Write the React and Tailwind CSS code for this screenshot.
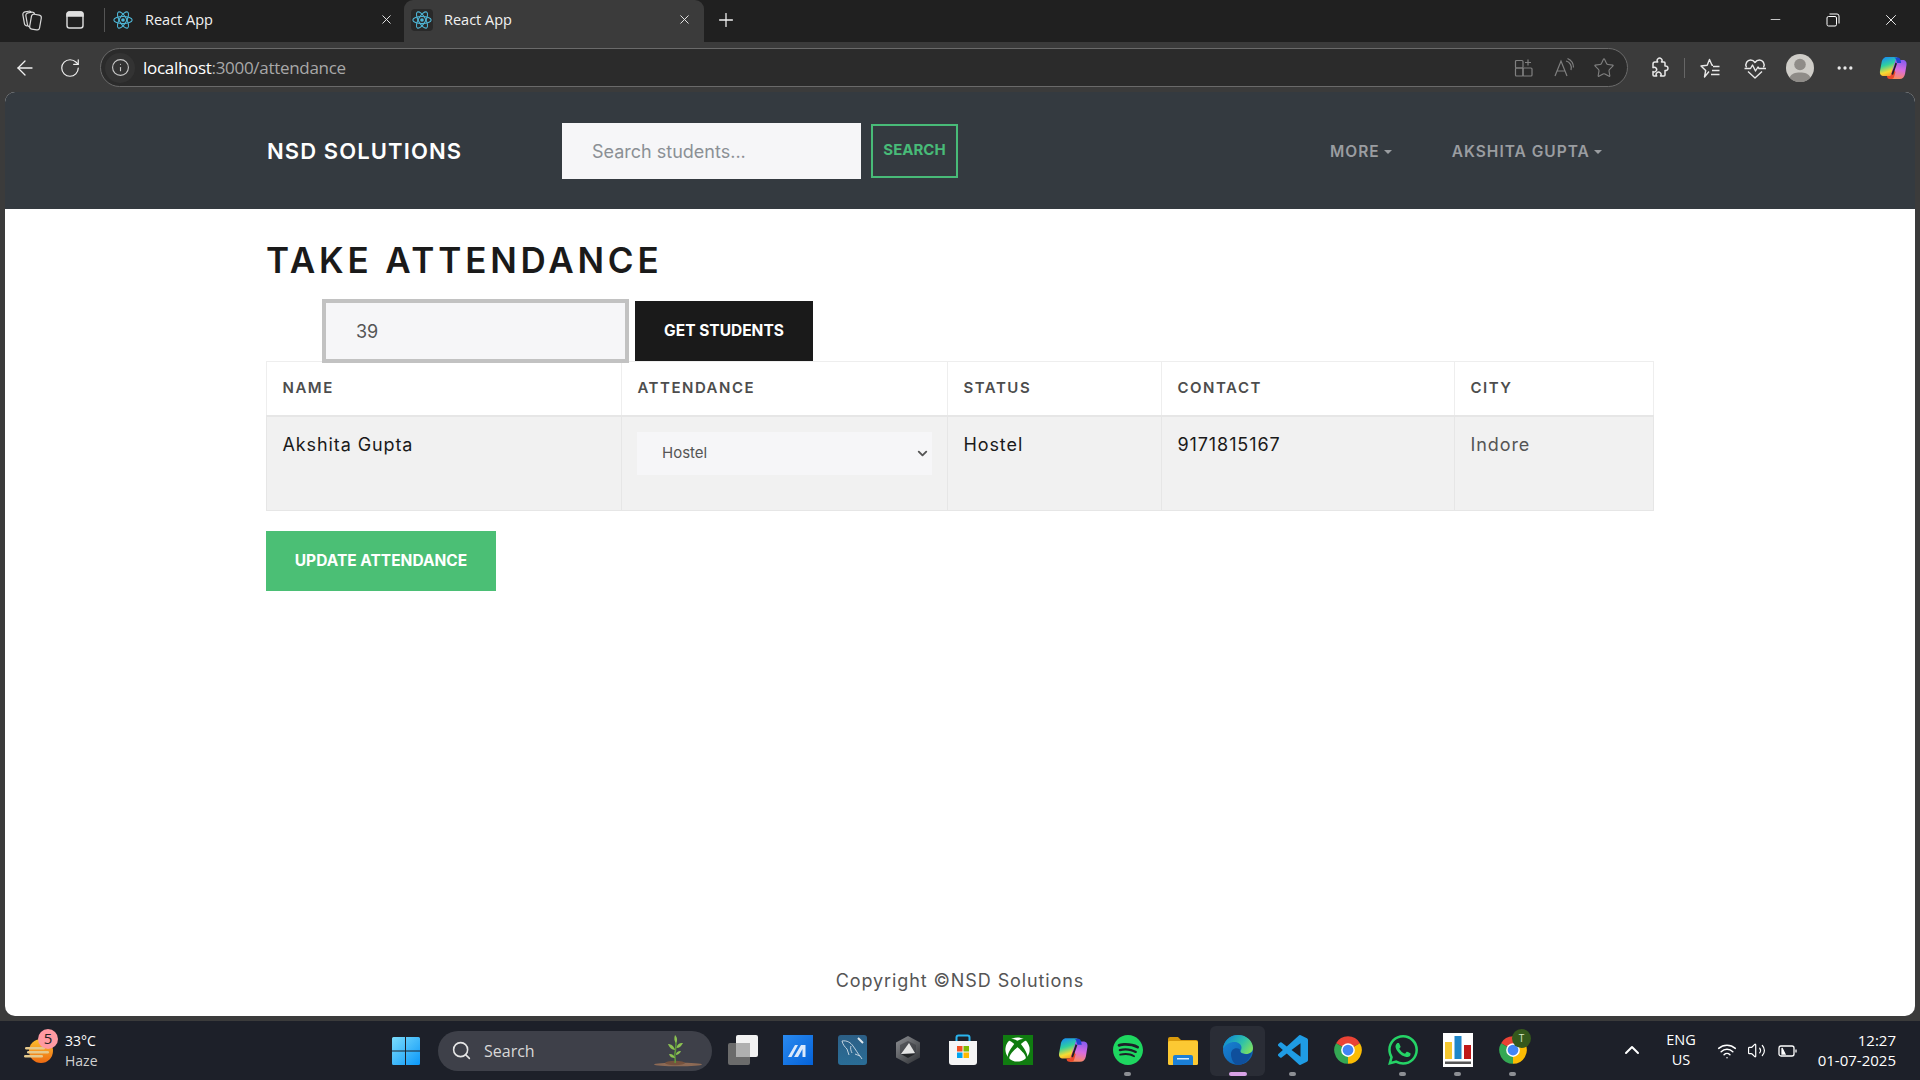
import React from "react";
import { ArrowLeft, RotateCw, Info, Star, Plus, X, Minus, ChevronUp, ChevronDown, Search, Wifi, Volume2, MoreHorizontal } from "lucide-react";
import { SiSpotify, SiWhatsapp } from "react-icons/si";
import { FaXbox } from "react-icons/fa";

const ReactAtom = () => (
  <svg width="20" height="20" viewBox="0 0 24 24" fill="none" stroke="#4fb6d6" strokeWidth="1.3">
    <ellipse cx="12" cy="12" rx="11" ry="4.3" />
    <ellipse cx="12" cy="12" rx="11" ry="4.3" transform="rotate(60 12 12)" />
    <ellipse cx="12" cy="12" rx="11" ry="4.3" transform="rotate(120 12 12)" />
    <circle cx="12" cy="12" r="2.2" fill="#4fb6d6" stroke="none" />
  </svg>
);

const Collections = () => (
  <svg width="24" height="24" viewBox="0 0 24 24" fill="#202020" stroke="#d8d8d8" strokeWidth="1.2">
    <rect x="3.5" y="3.5" width="9" height="14" rx="2.5" transform="rotate(-10 8 10)" />
    <rect x="6.5" y="4.5" width="9" height="14" rx="2.5" transform="rotate(-10 11 11)" />
    <rect x="10.5" y="6.5" width="10" height="15" rx="2.5" transform="rotate(10 15 14)" />
  </svg>
);

const TabsIcon = () => (
  <svg width="22" height="22" viewBox="0 0 22 22" fill="none" stroke="#e0e0e0" strokeWidth="1.4">
    <rect x="3" y="3" width="16" height="16" rx="2.5" />
    <path d="M3 7h16V5.500a2.500 2.500 0 0 0-2.500-2.500h-11A2.500 2.500 0 0 0 3 5.500z" fill="#e0e0e0" />
  </svg>
);

const RestoreIcon = () => (
  <svg width="14" height="14" viewBox="0 0 14 14" fill="none" stroke="#fff" strokeWidth="1">
    <rect x="1" y="3.500" width="9.500" height="9.500" rx="1.500" />
    <path d="M3.500 1h7.500A2 2 0 0 1 13 3v7.500" />
  </svg>
);

const AppsAdd = () => (
  <svg width="20" height="20" viewBox="0 0 20 20" fill="none" stroke="#808080" strokeWidth="1.2">
    <rect x="1.500" y="2.500" width="7.500" height="7.500" rx="1" />
    <rect x="1.500" y="10" width="7.500" height="8" rx="1" />
    <rect x="9" y="10" width="9" height="8" rx="1" />
    <path d="M14 1.500v6M11 4.500h6" />
  </svg>
);

const ReadAloud = () => (
  <svg width="22" height="22" viewBox="0 0 22 22" fill="none" stroke="#808080" strokeWidth="1.2">
    <path d="M2 19 8 4l6 15M4.500 14h7" />
    <path d="M13 4a7 7 0 0 1 5 9M14.500 1.500a10 10 0 0 1 6 9" />
  </svg>
);

const Puzzle = () => (
  <svg width="22" height="22" viewBox="0 0 22 22" fill="none" stroke="#e8e8e8" strokeWidth="1.5" strokeLinejoin="round">
    <path d="M7 5h2.700a2.400 2.400 0 1 1 3.800 0H16a1 1 0 0 1 1 1v3a2.300 2.300 0 1 1 0 4.400V18a1 1 0 0 1-1 1h-3.500a2.400 2.400 0 1 0-3.800 0H6a1 1 0 0 1-1-1v-3.500a2.300 2.300 0 1 0 0-3.800V7a2 2 0 0 1 2-2z" />
  </svg>
);

const FavList = () => (
  <svg width="22" height="22" viewBox="0 0 22 22" fill="none" stroke="#e8e8e8" strokeWidth="1.4" strokeLinejoin="round">
    <path d="M10 14.500 5.500 20l1.200-6.500L2 9l6.200-.8L10.500 2.500 13 8.200h1" />
    <path d="M14 9.500h6.500M13 13.500h7.500M12 17.500h8.500" />
  </svg>
);

const HeartPulse = () => (
  <svg width="24" height="24" viewBox="0 0 24 24" fill="none" stroke="#e8e8e8" strokeWidth="1.4" strokeLinejoin="round">
    <path d="M3.500 11.500C1.500 7.500 4.500 4 7.500 4c2 0 3.500 1 4.500 2.500C13 5 14.500 4 16.500 4c3 0 6 3.500 4 7.500" />
    <path d="M1.500 12.500h6l2-3.500 3 6 2.500-4 1 1.500h7" />
    <path d="M5 15.500l7 6.500 7-6.500" />
  </svg>
);

const Avatar = () => (
  <svg width="28" height="28" viewBox="0 0 28 28">
    <circle cx="14" cy="14" r="14" fill="#cfcdc8" />
    <circle cx="14" cy="10.500" r="5.800" fill="#8f8c88" />
    <path d="M3.500 23.500C5.500 19.500 9 18.500 14 18.500s8.500 1 10.500 5A14 14 0 0 1 3.500 23.500z" fill="#8f8c88" />
  </svg>
);

const Copilot = ({ id, size = 28 }) => (
  <svg width={size} height={size} viewBox="0 0 28 28">
    <defs>
      <linearGradient id={id + "a"} x1="0.3" y1="0" x2="0.6" y2="1">
        <stop offset="0" stopColor="#1a8ff0" />
        <stop offset="0.4" stopColor="#2fd0a0" />
        <stop offset="0.75" stopColor="#f5dc33" />
        <stop offset="1" stopColor="#f89a2a" />
      </linearGradient>
      <linearGradient id={id + "b"} x1="0.6" y1="0" x2="0.4" y2="1">
        <stop offset="0" stopColor="#8a5cf0" />
        <stop offset="0.5" stopColor="#d86ce0" />
        <stop offset="1" stopColor="#fb8a5a" />
      </linearGradient>
    </defs>
    <path d="M7.500 3h9.500c1.500 0 2 1 1.500 2.500L13 20c-.5 1.500-1.500 2-3 2H5c-3 0-4.500-2-4-5l1.500-8C3 5.500 5 3 7.500 3z" fill={`url(#${id}a)`} />
    <path d="M17 6h6.500c3 0 4.500 2 4 5L26 20c-.6 3-2.500 5-5.500 5H12c-1.500 0-1.500-1 -1-2.500L16 8c.3-1.200 0-2 1-2z" fill={`url(#${id}b)`} />
    <path d="M15 3.500h3c2 0 3 .5 3.500 2.500l.7 3H18l-1-3.500c-.3-1-.9-2-2-2z" fill="#1f45d0" />
    <path d="M8 22h3.500L14 15l2.500 3-1.500 5c-.3 1-1 2-2.500 2h-2c-1.500 0-2.500-1-2.500-3z" fill="#ea4a2a" />
    <path d="M16.500 8.500l1.500 1-4 11.500-1.500-1z" fill="#1d2029" />
  </svg>
);

const WinLogo = () => (
  <svg width="30" height="30" viewBox="0 0 30 30">
    <defs>
      <linearGradient id="win" x1="0" y1="0" x2="1" y2="1">
        <stop offset="0" stopColor="#7bdcfb" />
        <stop offset="1" stopColor="#0a97f8" />
      </linearGradient>
    </defs>
    <path d="M1 2.500A1.500 1.500 0 0 1 2.500 1h11.500v13.500H1zM15 1h12.500A1.500 1.500 0 0 1 29 2.500V14.500H15zM1 15.500h13V29H2.500A1.500 1.500 0 0 1 1 27.500zM15 15.500h14v12a1.500 1.500 0 0 1-1.500 1.500H15z" fill="url(#win)" />
  </svg>
);

const Sprout = () => (
  <svg width="48" height="32" viewBox="0 0 48 32">
    <ellipse cx="24" cy="29.500" rx="24" ry="1.800" fill="#8d6a55" />
    <ellipse cx="21" cy="28" rx="10" ry="2.200" fill="#75523e" />
    <path d="M21 28c1-4-1-6 0-10s1-8 1-14" stroke="#5e9a3a" strokeWidth="1.500" fill="none" />
    <path d="M22 8c-2-2-2-5-1-8 2 2 3 5 1 8zM21 15c-3 0-6-3-7-6 3 0 6 2 7 6zM22.500 13c3 0 5-2 6.500-5-3-.5-6 1-6.500 5zM21 23c-3 0-5-1-6-4 3-.5 5 1 6 4zM22 20c3-.5 4-2 5-4-3 0-5 1-5 4z" fill="#8cc152" />
  </svg>
);

const StackIcon = () => (
  <svg width="32" height="32" viewBox="0 0 32 32">
    <rect x="1" y="9" width="22" height="22" rx="2" fill="#6b6b6b" />
    <rect x="9" y="1" width="22" height="22" rx="2" fill="#f2f2f2" />
    <rect x="9" y="9" width="14" height="14" fill="#b0b0b0" />
  </svg>
);

const MeriseLogo = () => (
  <svg width="30" height="30" viewBox="0 0 30 30">
    <defs>
      <linearGradient id="ma" x1="0" y1="0" x2="1" y2="1">
        <stop offset="0" stopColor="#2a8af0" />
        <stop offset="1" stopColor="#0462d8" />
      </linearGradient>
    </defs>
    <rect width="30" height="30" fill="url(#ma)" />
    <path d="M5 22 12 10h3L8.500 22zM11 22l7-12h4.500v12h-3v-8l-4.500 8z" fill="#dbe9fb" />
  </svg>
);

const MysqlTile = () => (
  <svg width="29" height="30" viewBox="0 0 29 30">
    <defs>
      <linearGradient id="my" x1="0" y1="0" x2="0" y2="1">
        <stop offset="0" stopColor="#2c5f86" />
        <stop offset="1" stopColor="#2a6d96" />
      </linearGradient>
    </defs>
    <rect width="29" height="30" rx="3" fill="url(#my)" />
    <g fill="none" stroke="#cfdde8" strokeWidth="0.9">
      <path d="M4 6c5-1 9 2 11 5 3 4 5 8 7 10l2 3" />
      <path d="M4 6c1 4 3 6 5 8 1 2 1 4 2 6" />
      <path d="M13 11c-1 2 0 5 1 7M22 21l-5-2" />
    </g>
    <path d="M20 3l5 5" stroke="#dfe8ee" strokeWidth="2" />
  </svg>
);

const HexLogo = () => (
  <svg width="28" height="30" viewBox="0 0 28 30">
    <defs>
      <linearGradient id="hx" x1="0" y1="0" x2="0.8" y2="1">
        <stop offset="0" stopColor="#8e9094" />
        <stop offset="1" stopColor="#36383c" />
      </linearGradient>
    </defs>
    <path d="M14 1l12 6.500v15L14 29 2 22.500v-15z" fill="url(#hx)" />
    <path d="M14 6l8 4v9L14 15l-8 4v-9z" fill="#3c3e42" opacity="0.6" />
    <path d="M15 8l6 10-14 1z" fill="#e4e4e4" />
    <path d="M7 19h14l-7 4z" fill="#232528" />
  </svg>
);

const StoreIcon = () => (
  <svg width="30" height="32" viewBox="0 0 30 32">
    <path d="M8.500 8V3.500A2 2 0 0 1 10.500 1.500h9a2 2 0 0 1 2 2V8" fill="none" stroke="#2ab4ee" strokeWidth="2" />
    <path d="M1 7h28v21a3 3 0 0 1-3 3H4a3 3 0 0 1-3-3z" fill="#f5f5f5" />
    <rect x="9" y="12" width="5.500" height="5.500" fill="#f25022" />
    <rect x="15.500" y="12" width="5.500" height="5.500" fill="#7fba00" />
    <rect x="9" y="18.500" width="5.500" height="5.500" fill="#00a4ef" />
    <rect x="15.500" y="18.500" width="5.500" height="5.500" fill="#ffb900" />
  </svg>
);

const FolderIcon = () => (
  <svg width="32" height="30" viewBox="0 0 32 30">
    <path d="M1 4a2 2 0 0 1 2-2h8l3 3h15a2 2 0 0 1 2 2v3H1z" fill="#d99a0c" />
    <rect x="1" y="6" width="30" height="24" rx="1.500" fill="#fcc933" />
    <path d="M6 30v-8a2 2 0 0 1 2-2h16a2 2 0 0 1 2 2v8z" fill="#1b7fd6" />
    <rect x="10" y="23" width="12" height="1.500" fill="#d8ecfb" />
  </svg>
);

const EdgeLogo = () => (
  <svg width="32" height="32" viewBox="0 0 32 32">
    <defs>
      <linearGradient id="edge1" x1="0" y1="0.2" x2="1" y2="0.7">
        <stop offset="0" stopColor="#0d84d6" />
        <stop offset="0.6" stopColor="#2fc2a8" />
        <stop offset="1" stopColor="#7ee060" />
      </linearGradient>
      <linearGradient id="edge2" x1="0" y1="0" x2="1" y2="1">
        <stop offset="0" stopColor="#1a86d8" />
        <stop offset="1" stopColor="#0c5aa8" />
      </linearGradient>
    </defs>
    <circle cx="16" cy="16" r="15" fill="url(#edge2)" />
    <path d="M16 1c9 0 15 6.500 15 13 0 4-3.500 6-7 6s-5.500-1-5.500-2.500c0-1 1-1.500 1-4 0-3-3-5.500-7-5.500C8 8 3 10.500 1 15 1.500 7 8 1 16 1z" fill="url(#edge1)" />
    <path d="M9 20c0-5 5-7.500 9-4.500-.5 1 0 2.500 1.500 3.500 2.500 1.500 7 1.800 10-.500C28 25.500 22 31 16 31c-4 0-7-6-7-11z" fill="#0f4f9c" />
  </svg>
);

const VSCode = () => (
  <svg width="30" height="30" viewBox="0 0 24 24">
    <path fill="#1f9ce4" d="M23.15 2.587L18.21.21a1.494 1.494 0 0 0-1.705.29l-9.46 8.63-4.12-3.128a.999.999 0 0 0-1.276.057L.327 7.261A1 1 0 0 0 .326 8.74L3.899 12 .326 15.26a1 1 0 0 0 .001 1.479L1.65 17.94a.999.999 0 0 0 1.276.057l4.12-3.128 9.46 8.63a1.492 1.492 0 0 0 1.704.29l4.942-2.377A1.5 1.5 0 0 0 24 20.06V3.939a1.5 1.5 0 0 0-.85-1.352zm-5.146 14.861L10.826 12l7.178-5.448v10.896z" />
  </svg>
);

const Chrome = () => (
  <svg width="30" height="30" viewBox="0 0 24 24">
    <path d="M12 12 2.470 6.500A11 11 0 0 1 21.530 6.500z" fill="#ea4335" />
    <path d="M12 12 21.530 6.500A11 11 0 0 1 12 23z" fill="#fbbc04" />
    <path d="M12 12 12 23A11 11 0 0 1 2.470 6.500z" fill="#34a853" />
    <circle cx="12" cy="12" r="5.500" fill="#fff" />
    <circle cx="12" cy="12" r="4.300" fill="#4285f4" />
  </svg>
);

const Codeforces = () => (
  <svg width="30" height="34" viewBox="0 0 30 34">
    <rect width="30" height="34" fill="#fff" />
    <rect x="2" y="9" width="7" height="17" fill="#f6c72f" />
    <rect x="11.500" y="3" width="7" height="23" fill="#1f86c8" />
    <rect x="21" y="12" width="7" height="14" fill="#c01818" />
    <rect x="2" y="28.500" width="26" height="2.500" fill="#555" />
  </svg>
);

const TaskItem = ({ children, dot, active }) => (
  <div className={`relative flex h-[50px] w-[55px] items-center justify-center rounded-md pb-[2px] ${active ? "bg-[#2a2d36]" : ""}`}>
    {children}
    {dot && <span className="absolute bottom-[0px] h-[4px] w-[7px] rounded-full bg-[#8d8f94]" />}
    {active && <span className="absolute bottom-[0px] h-[4px] w-[18px] rounded-full bg-[#d8a2e6]" />}
  </div>
);

const Tab = ({ active }) => (
  <div className={`flex h-[42px] items-center pb-[3px] pl-[7px] ${active ? "w-[300px] rounded-t-[9px] bg-[#3b3b3b] pr-[12px]" : "w-[299px] pr-[10px]"}`}>
    <span className={`flex h-[22px] w-[22px] items-center justify-center rounded-sm ${active ? "bg-[#292929]" : ""}`}>
      <ReactAtom />
    </span>
    <span className="ml-[11px] flex-1 text-[14.5px] text-[#f2f2f2]">React App</span>
    <X size={15} strokeWidth={1.5} className="text-[#eee]" />
  </div>
);

const Caret = () => (
  <span className="ml-[4px] inline-block h-0 w-0 border-x-[4px] border-t-[4px] border-x-transparent border-t-[#9a9da1]" />
);

const Th = ({ w, children }) => (
  <th className={`${w} border border-b-2 border-[#eeeeee] border-b-[#e6e6e6] px-[15.5px] py-0 text-left align-middle text-[15px] font-semibold tracking-[1.5px] text-[#4d4d4d]`}>
    {children}
  </th>
);

const Td = ({ children, cls = "text-[#1a1a1a]" }) => (
  <td className={`border border-[#e6e6e6] px-[15.5px] pt-[16px] align-top text-[18px] leading-[24px] tracking-[0.9px] ${cls}`}>
    {children}
  </td>
);

export default function App() {
  return (
    <div className="flex h-[1080px] w-[1920px] flex-col overflow-hidden bg-[#3b3b3b] font-['Inter',sans-serif]">
      {/* tab strip */}
      <div className="flex h-[42px] shrink-0 items-center bg-[#202020] font-['Open_Sans','Noto_Sans',sans-serif]">
        <div className="flex w-[52px] justify-end pb-[3px] pr-[8px]"><Collections /></div>
        <div className="flex w-[46px] justify-center pb-[3px]"><TabsIcon /></div>
        <div className="ml-[6px] mb-[3px] h-[24px] w-px bg-[#555]" />
        <Tab />
        <Tab active />
        <Plus size={22} strokeWidth={1.4} className="ml-[11px] mb-[3px] text-[#f0f0f0]" />
        <div className="ml-auto flex items-center pb-[3px]">
          <div className="flex w-[58px] justify-center"><Minus size={15} strokeWidth={1.2} className="text-white" /></div>
          <div className="flex w-[58px] justify-center"><RestoreIcon /></div>
          <div className="flex w-[58px] justify-center"><X size={18} strokeWidth={1.2} className="text-white" /></div>
        </div>
      </div>

      {/* toolbar */}
      <div className="flex h-[50px] shrink-0 items-center pt-[1px]">
        <div className="flex w-[50px] shrink-0 justify-center"><ArrowLeft size={24} strokeWidth={1.3} className="text-[#f0f0f0]" /></div>
        <div className="flex w-[40px] shrink-0 justify-center"><RotateCw size={22} strokeWidth={1.3} className="text-[#f0f0f0]" /></div>
        <div className="ml-[10px] flex h-[39px] w-[1528px] shrink-0 items-center rounded-full border border-[#6a6a6a] bg-[#2b2b2b] pl-[4px] font-['Open_Sans','Noto_Sans',sans-serif]">
          <span className="flex h-[30px] w-[30px] items-center justify-center rounded-full bg-[#333]">
            <Info size={19} strokeWidth={1.4} className="text-[#c8c8c8]" />
          </span>
          <span className="ml-[8px] text-[17px] tracking-[-0.3px] text-white">localhost<span className="text-[#a8a8a8]">:3000/attendance</span></span>
          <div className="ml-auto flex items-center pr-[3px]">
            <div className="flex w-[40px] justify-center"><AppsAdd /></div>
            <div className="flex w-[40px] justify-center"><ReadAloud /></div>
            <div className="flex w-[40px] justify-center"><Star size={22} strokeWidth={1.2} className="text-[#808080]" /></div>
          </div>
        </div>
        <div className="flex w-[42px] shrink-0 justify-end"><Puzzle /></div>
        <div className="ml-[14px] h-[20px] w-px shrink-0 bg-[#666]" />
        <div className="ml-[5px] flex w-[40px] shrink-0 justify-center"><FavList /></div>
        <div className="flex w-[50px] shrink-0 justify-center"><HeartPulse /></div>
        <div className="flex w-[40px] shrink-0 justify-center"><Avatar /></div>
        <div className="flex w-[50px] shrink-0 justify-center"><MoreHorizontal size={20} strokeWidth={2} className="text-[#e8e8e8]" /></div>
        <div className="flex w-[46px] shrink-0 justify-center"><Copilot id="cp1" /></div>
      </div>

      {/* page */}
      <div className="mx-[5px] flex h-[924px] shrink-0 flex-col overflow-hidden rounded-[10px] bg-white">
        <nav className="flex h-[117px] shrink-0 items-center bg-[#343a40] pl-[262px]">
          <span className="w-[295px] pt-[2px] text-[22px] font-semibold tracking-[1.1px] text-white">NSD SOLUTIONS</span>
          <input
            readOnly
            placeholder="Search students..."
            className="h-[56px] w-[299px] bg-[#f6f6f8] px-[30px] pt-[2px] text-[18px] outline-none placeholder:text-[#8b9095]"
          />
          <button className="ml-[10px] h-[54px] w-[87px] border-2 border-[#48bb78] text-[15px] font-bold text-[#48bb78]">SEARCH</button>
          <div className="ml-[372px] flex items-center pt-[2px] text-[15.5px] font-semibold tracking-[1px] text-[#9a9da1]">
            MORE<Caret />
          </div>
          <div className="ml-[60px] flex items-center pt-[2px] text-[15.5px] font-semibold tracking-[1px] text-[#9a9da1]">
            AKSHITA GUPTA<Caret />
          </div>
        </nav>

        <main className="flex flex-1 flex-col pl-[261px]">
          <h1 className="mt-[27px] text-[35px] font-semibold leading-[48px] tracking-[3.8px] text-[#1a1a1a]">TAKE ATTENDANCE</h1>
          <div className="mt-[15px] flex h-[62px] pl-[56px]">
            <input
              readOnly
              value="39"
              className="relative z-10 h-[64px] w-[307px] border-[4px] border-[#c2c2c2] bg-[#f6f6f8] px-[30px] text-[18px] text-[#555] outline-none"
            />
            <button className="ml-[6px] mt-[2px] h-[60px] w-[178px] bg-[#1a1a1a] text-[15.5px] font-bold text-white">GET STUDENTS</button>
          </div>
          <table className="w-[1387px] table-fixed border-collapse">
            <thead>
              <tr className="h-[54px] bg-white">
                <Th w="w-[355px]">NAME</Th>
                <Th w="w-[326px]">ATTENDANCE</Th>
                <Th w="w-[214px]">STATUS</Th>
                <Th w="w-[293px]">CONTACT</Th>
                <Th w="w-[199px]">CITY</Th>
              </tr>
            </thead>
            <tbody>
              <tr className="h-[95px] bg-[#f1f1f1]">
                <Td>Akshita Gupta</Td>
                <td className="border border-[#e6e6e6] px-[15px] pt-[15px] align-top">
                  <div className="relative h-[43px] w-[295px]">
                    <select defaultValue="Hostel" className="h-[43px] w-[295px] appearance-none bg-[#f6f6f8] pl-[25px] text-[15px] text-[#555] outline-none">
                      <option>Hostel</option>
                    </select>
                    <ChevronDown size={15} strokeWidth={3} className="pointer-events-none absolute right-[2px] top-[14px] text-[#555]" />
                  </div>
                </td>
                <Td>Hostel</Td>
                <Td>9171815167</Td>
                <Td cls="text-[#555]">Indore</Td>
              </tr>
            </tbody>
          </table>
          <button className="mt-[20px] h-[60px] w-[230px] bg-[#4bbf75] text-[15.5px] font-bold text-white">UPDATE ATTENDANCE</button>
          <footer className="mt-auto -ml-[261px] pb-[22px] text-center text-[18px] tracking-[0.9px] text-[#555]">
            Copyright ©NSD Solutions
          </footer>
        </main>
      </div>

      {/* taskbar */}
      <div className="mt-[5px] flex flex-1 items-center bg-[#1d2029] font-['Open_Sans','Noto_Sans',sans-serif] text-white">
        <div className="flex w-[380px] items-center pl-[24px]">
          <div className="relative h-[30px] w-[30px]">
            <svg width="30" height="30" viewBox="0 0 30 30">
              <defs>
                <linearGradient id="sun" x1="0" y1="0" x2="0" y2="1">
                  <stop offset="0" stopColor="#fdc02f" />
                  <stop offset="1" stopColor="#ed6a12" />
                </linearGradient>
              </defs>
              <circle cx="17" cy="15" r="12" fill="url(#sun)" />
              <rect x="1" y="11" width="20" height="2.500" rx="1.200" fill="#e6c98c" />
              <rect x="3" y="15" width="22" height="2.500" rx="1.200" fill="#e6c98c" />
              <rect x="0" y="19" width="19" height="2.500" rx="1.200" fill="#e6c98c" />
            </svg>
            <span className="absolute -top-[7px] left-[14px] flex h-[20px] w-[20px] items-center justify-center rounded-full bg-[#ff9aa2] text-[15px] text-[#222]">5</span>
          </div>
          <div className="ml-[11px] flex flex-col text-[14px] leading-[20px]">
            <span>33°C</span>
            <span className="text-[#d0d0d0]">Haze</span>
          </div>
        </div>
        <div className="flex w-[52px] justify-center"><WinLogo /></div>
        <div className="ml-[6px] flex h-[40px] w-[274px] items-center rounded-full bg-[#3e4049] pl-[13px] pr-[10px]">
          <Search size={21} strokeWidth={1.8} className="text-[#e6e6e6]" />
          <span className="ml-[12px] text-[16px] text-[#d8d8d8]">Search</span>
          <span className="ml-auto"><Sprout /></span>
        </div>
        <div className="ml-[3px] flex items-center">
          <TaskItem><StackIcon /></TaskItem>
          <TaskItem><MeriseLogo /></TaskItem>
          <TaskItem><MysqlTile /></TaskItem>
          <TaskItem><HexLogo /></TaskItem>
          <TaskItem><StoreIcon /></TaskItem>
          <TaskItem>
            <span className="flex h-[30px] w-[30px] items-center justify-center bg-[#107c10]">
              <FaXbox size={25} className="text-white" />
            </span>
          </TaskItem>
          <TaskItem><Copilot id="cp2" size={30} /></TaskItem>
          <TaskItem dot><SiSpotify size={30} className="text-[#1ed760]" /></TaskItem>
          <TaskItem><FolderIcon /></TaskItem>
          <TaskItem active><EdgeLogo /></TaskItem>
          <TaskItem dot><VSCode /></TaskItem>
          <TaskItem><Chrome /></TaskItem>
          <TaskItem dot><SiWhatsapp size={30} className="text-[#25d366]" /></TaskItem>
          <TaskItem dot><Codeforces /></TaskItem>
          <TaskItem dot>
            <Chrome />
            <span className="absolute left-[27px] top-[3px] flex h-[19px] w-[19px] items-center justify-center rounded-full bg-[#35591c] text-[10px] text-[#d8e8c8]">T</span>
          </TaskItem>
        </div>
        <div className="ml-[79px] flex w-[26px] justify-center pb-[2px]"><ChevronUp size={24} strokeWidth={2} /></div>
        <div className="flex w-[70px] flex-col items-center pb-[2px] pl-[2px] text-[14.5px] leading-[20px]">
          <span>ENG</span>
          <span>US</span>
        </div>
        <div className="flex w-[24px] justify-center"><Wifi size={20} strokeWidth={1.8} /></div>
        <div className="flex w-[34px] justify-center"><Volume2 size={19} strokeWidth={1.5} /></div>
        <div className="flex w-[30px] justify-center">
          <svg width="20" height="18" viewBox="0 0 20 18" fill="none" stroke="#fff" strokeWidth="1.300">
            <rect x="1" y="4" width="15" height="10" rx="2" />
            <path d="M18 7.500v3" />
            <path d="M4 6v6h3z" fill="#fff" />
          </svg>
        </div>
        <div className="flex w-[93px] flex-col items-end pb-[2px] text-[15px] leading-[20px]">
          <span>12:27</span>
          <span>01-07-2025</span>
        </div>
      </div>
    </div>
  );
}
